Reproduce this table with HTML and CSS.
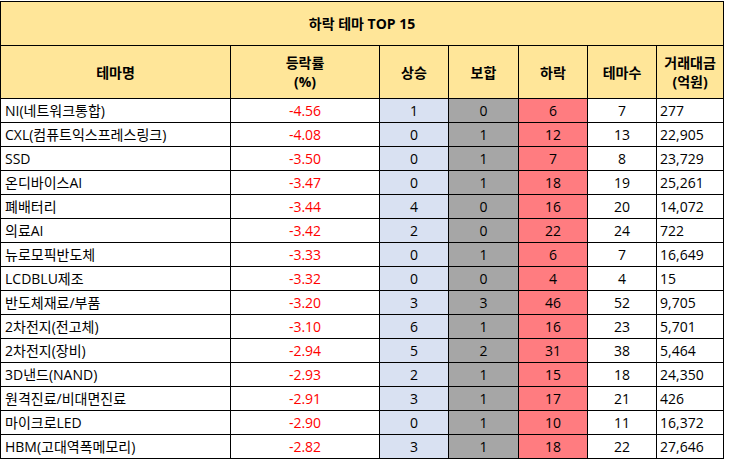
FILE: index.html
```html
<!DOCTYPE html>
<html lang="ko">
<head>
<meta charset="utf-8">
<title>하락 테마 TOP 15</title>
<link rel="stylesheet" href="styles.css">
</head>
<body>
<table class="theme-table">
  <colgroup>
    <col class="c-name"><col class="c-rate"><col class="c-up"><col class="c-flat"><col class="c-down"><col class="c-cnt"><col class="c-amt">
  </colgroup>
  <thead>
    <tr class="title-row"><th colspan="7">하락 테마 TOP 15</th></tr>
    <tr class="head-row">
      <th>테마명</th>
      <th>등락률<br>(%)</th>
      <th>상승</th>
      <th>보합</th>
      <th>하락</th>
      <th>테마수</th>
      <th>거래대금<br>(억원)</th>
    </tr>
  </thead>
  <tbody>
    <tr><td class="name">NI(네트워크통합)</td><td class="rate">-4.56</td><td class="up">1</td><td class="flat">0</td><td class="down">6</td><td class="cnt">7</td><td class="amt">277</td></tr>
    <tr><td class="name">CXL(컴퓨트익스프레스링크)</td><td class="rate">-4.08</td><td class="up">0</td><td class="flat">1</td><td class="down">12</td><td class="cnt">13</td><td class="amt">22,905</td></tr>
    <tr><td class="name">SSD</td><td class="rate">-3.50</td><td class="up">0</td><td class="flat">1</td><td class="down">7</td><td class="cnt">8</td><td class="amt">23,729</td></tr>
    <tr><td class="name">온디바이스AI</td><td class="rate">-3.47</td><td class="up">0</td><td class="flat">1</td><td class="down">18</td><td class="cnt">19</td><td class="amt">25,261</td></tr>
    <tr><td class="name">폐배터리</td><td class="rate">-3.44</td><td class="up">4</td><td class="flat">0</td><td class="down">16</td><td class="cnt">20</td><td class="amt">14,072</td></tr>
    <tr><td class="name">의료AI</td><td class="rate">-3.42</td><td class="up">2</td><td class="flat">0</td><td class="down">22</td><td class="cnt">24</td><td class="amt">722</td></tr>
    <tr><td class="name">뉴로모픽반도체</td><td class="rate">-3.33</td><td class="up">0</td><td class="flat">1</td><td class="down">6</td><td class="cnt">7</td><td class="amt">16,649</td></tr>
    <tr><td class="name">LCDBLU제조</td><td class="rate">-3.32</td><td class="up">0</td><td class="flat">0</td><td class="down">4</td><td class="cnt">4</td><td class="amt">15</td></tr>
    <tr><td class="name">반도체재료/부품</td><td class="rate">-3.20</td><td class="up">3</td><td class="flat">3</td><td class="down">46</td><td class="cnt">52</td><td class="amt">9,705</td></tr>
    <tr><td class="name">2차전지(전고체)</td><td class="rate">-3.10</td><td class="up">6</td><td class="flat">1</td><td class="down">16</td><td class="cnt">23</td><td class="amt">5,701</td></tr>
    <tr><td class="name">2차전지(장비)</td><td class="rate">-2.94</td><td class="up">5</td><td class="flat">2</td><td class="down">31</td><td class="cnt">38</td><td class="amt">5,464</td></tr>
    <tr><td class="name">3D낸드(NAND)</td><td class="rate">-2.93</td><td class="up">2</td><td class="flat">1</td><td class="down">15</td><td class="cnt">18</td><td class="amt">24,350</td></tr>
    <tr><td class="name">원격진료/비대면진료</td><td class="rate">-2.91</td><td class="up">3</td><td class="flat">1</td><td class="down">17</td><td class="cnt">21</td><td class="amt">426</td></tr>
    <tr><td class="name">마이크로LED</td><td class="rate">-2.90</td><td class="up">0</td><td class="flat">1</td><td class="down">10</td><td class="cnt">11</td><td class="amt">16,372</td></tr>
    <tr><td class="name">HBM(고대역폭메모리)</td><td class="rate">-2.82</td><td class="up">3</td><td class="flat">1</td><td class="down">18</td><td class="cnt">22</td><td class="amt">27,646</td></tr>
  </tbody>
</table>
</body>
</html>
```
FILE: styles.css
```css
html, body {
  margin: 0;
  padding: 0;
  background: #ffffff;
}

body {
  padding-top: 1px;
  font-family: "Open Sans", "Noto Sans CJK KR", sans-serif;
  font-size: 14px;
  color: #000000;
}

.theme-table {
  border-collapse: collapse;
  table-layout: fixed;
  width: 724px;
}

.c-name { width: 230px; }
.c-rate { width: 149px; }
.c-up { width: 69px; }
.c-flat { width: 70px; }
.c-down { width: 69px; }
.c-cnt { width: 69px; }
.c-amt { width: 67px; }

.theme-table th,
.theme-table td {
  border: 1px solid #000000;
  padding: 0;
  overflow: hidden;
  white-space: nowrap;
}

.title-row th {
  height: 43px;
  background: #ffe699;
  font-weight: 700;
  text-align: center;
  vertical-align: middle;
  line-height: 20px;
}

.head-row th {
  height: 52px;
  background: #ffe699;
  font-weight: 700;
  text-align: center;
  vertical-align: middle;
  line-height: 19px;
}

.theme-table td {
  height: 23px;
  line-height: 23px;
  vertical-align: middle;
  text-align: center;
}

.theme-table td.name {
  text-align: left;
  padding-left: 4px;
}

.theme-table td.amt {
  text-align: left;
  padding-left: 3px;
}

.rate { color: #ff0000; }
.up { background: #d9e1f2; }
.flat { background: #a6a6a6; }
.down { background: #ff7c80; }
```
